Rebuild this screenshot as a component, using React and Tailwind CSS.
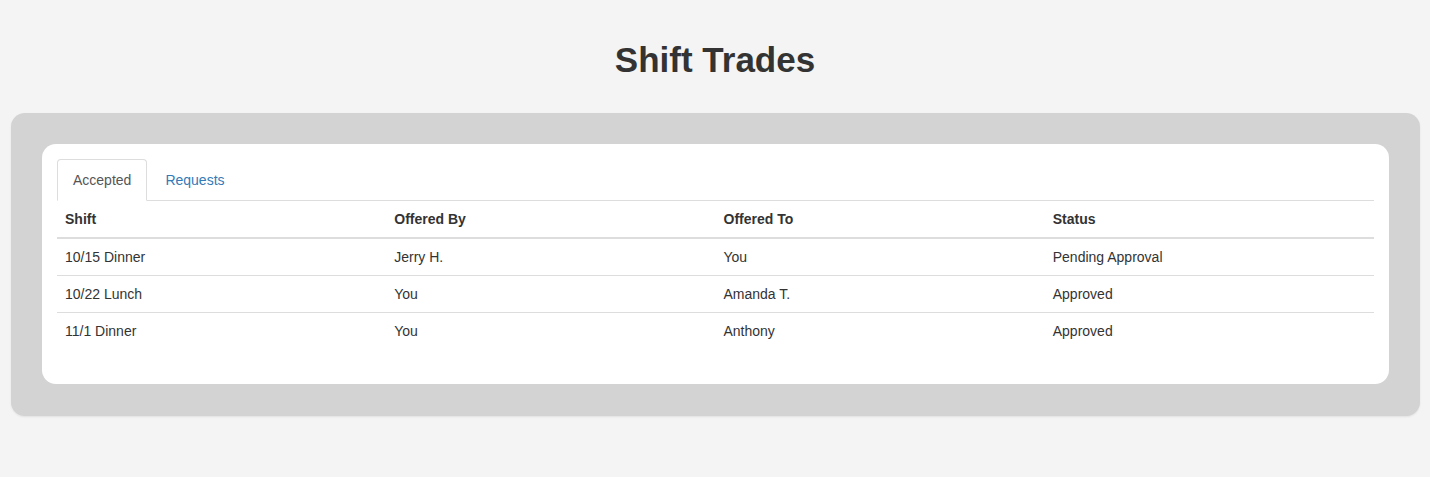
import React, { useState } from "react";

const trades = [
  { shift: "10/15 Dinner", by: "Jerry H.", to: "You", status: "Pending Approval" },
  { shift: "10/22 Lunch", by: "You", to: "Amanda T.", status: "Approved" },
  { shift: "11/1 Dinner", by: "You", to: "Anthony", status: "Approved" },
];

export default function App() {
  const [tab, setTab] = useState("accepted");

  return (
    <div className="min-h-[477px] bg-[#f4f4f4] pt-[40px] pb-[10px] font-['Liberation_Sans',Arial,sans-serif] text-[14px] text-[#333]">
      <h1 className="text-center text-[35px] leading-[40px] font-bold text-[#333] mb-[33px]">
        Shift Trades
      </h1>

      <div className="ml-[11px] mr-[10px] rounded-[14px] bg-[#d3d3d3] px-[31px] pt-[31px] pb-[32px] shadow-[0_1px_2px_rgba(0,0,0,0.08)]">
        <div className="rounded-[14px] bg-white px-[15px] pt-[15px] pb-[35px]">
          <ul className="flex border-b border-[#ddd]">
            <li className="mr-[2px] -mb-px">
              <button
                onClick={() => setTab("accepted")}
                className={
                  tab === "accepted"
                    ? "block rounded-t-[4px] border border-[#ddd] border-b-transparent bg-white px-[15px] py-[10px] leading-[20px] text-[#555]"
                    : "block rounded-t-[4px] border border-transparent px-[15px] py-[10px] leading-[20px] text-[#337ab7]"
                }
              >
                Accepted
              </button>
            </li>
            <li className="mr-[2px] -mb-px">
              <button
                onClick={() => setTab("requests")}
                className={
                  tab === "requests"
                    ? "block rounded-t-[4px] border border-[#ddd] border-b-transparent bg-white px-[15px] py-[10px] leading-[20px] text-[#555]"
                    : "block rounded-t-[4px] border border-transparent px-[15px] py-[10px] leading-[20px] text-[#337ab7]"
                }
              >
                Requests
              </button>
            </li>
          </ul>

          <table className="w-full table-fixed border-collapse">
            <thead>
              <tr>
                <th className="border-b-2 border-[#ddd] p-[8px] text-left font-bold leading-[20px]">Shift</th>
                <th className="border-b-2 border-[#ddd] p-[8px] text-left font-bold leading-[20px]">Offered By</th>
                <th className="border-b-2 border-[#ddd] p-[8px] text-left font-bold leading-[20px]">Offered To</th>
                <th className="border-b-2 border-[#ddd] p-[8px] text-left font-bold leading-[20px]">Status</th>
              </tr>
            </thead>
            <tbody>
              {trades.map((t, i) => (
                <tr key={i}>
                  <td className={i > 0 ? "border-t border-[#ddd] p-[8px] leading-[20px]" : "p-[8px] leading-[20px]"}>{t.shift}</td>
                  <td className={i > 0 ? "border-t border-[#ddd] p-[8px] leading-[20px]" : "p-[8px] leading-[20px]"}>{t.by}</td>
                  <td className={i > 0 ? "border-t border-[#ddd] p-[8px] leading-[20px]" : "p-[8px] leading-[20px]"}>{t.to}</td>
                  <td className={i > 0 ? "border-t border-[#ddd] p-[8px] leading-[20px]" : "p-[8px] leading-[20px]"}>{t.status}</td>
                </tr>
              ))}
            </tbody>
          </table>
        </div>
      </div>
    </div>
  );
}
